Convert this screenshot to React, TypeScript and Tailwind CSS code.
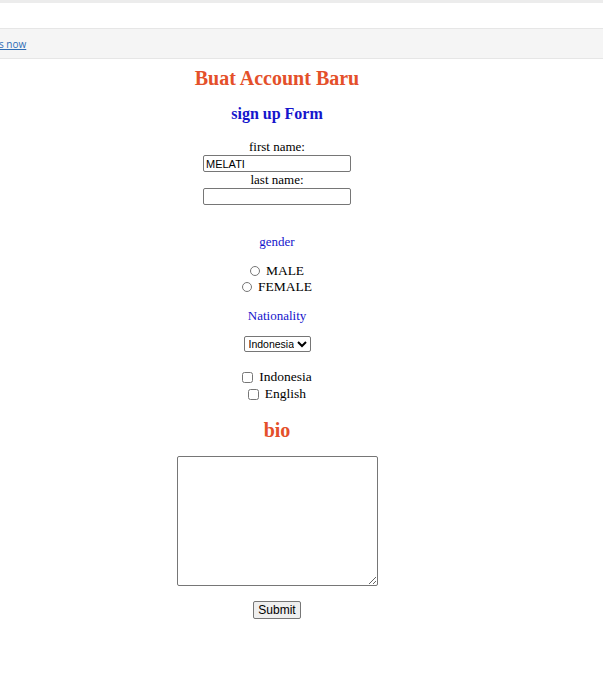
import React from "react";

export default function App() {
  const serif = { fontFamily: '"Liberation Serif", "Times New Roman", serif' };
  const sans = { fontFamily: '"Liberation Sans", Arial, sans-serif' };
  return (
    <div className="w-[603px] h-[675px] bg-white overflow-hidden" style={serif}>
      <div className="h-[3px] bg-[#ececec]" />
      <div className="h-[25px] bg-white" />
      <div className="h-[31px] bg-[#f5f5f5] border-t border-b border-[#e6e6e6] flex items-center">
        <a
          href="#"
          className="text-[10px] leading-none text-[#2f6db5] underline -ml-[1px]"
          style={{ fontFamily: '"Open Sans", "Liberation Sans", sans-serif' }}
        >
          s now
        </a>
      </div>
      <div className="w-[554px] flex flex-col items-center text-black">
        <h1 className="mt-[7px] text-[20px] leading-[24px] font-bold text-[#e4502a]">Buat Account Baru</h1>
        <h2 className="mt-[14px] text-[16px] leading-[20px] font-bold text-[#1515cc]">sign up Form</h2>
        <div className="mt-[15px] text-[13px] leading-[15px]">first name:</div>
        <input
          defaultValue="MELATI"
          className="mt-[1px] w-[148px] h-[17px] border border-[#767676] rounded-[2px] px-[2px] text-[11px] leading-none text-black"
          style={sans}
        />
        <div className="text-[13px] leading-[15px]">last name:</div>
        <input
          className="mt-[1px] w-[148px] h-[17px] border border-[#767676] rounded-[2px] px-[2px] text-[11px]"
          style={sans}
        />
        <div className="mt-[29px] text-[13px] leading-[15px] text-[#1515cc]">gender</div>
        <label className="mt-[14px] flex items-center text-[13.5px] leading-[16px]">
          <input type="radio" name="g" className="w-[10px] h-[10px] mr-[6px] m-0" />
          MALE
        </label>
        <label className="flex items-center text-[13.5px] leading-[16px]">
          <input type="radio" name="g" className="w-[10px] h-[10px] mr-[6px] m-0" />
          FEMALE
        </label>
        <div className="mt-[13px] text-[13px] leading-[15px] text-[#1515cc]">Nationality</div>
        <select
          className="mt-[13px] w-[67px] h-[16px] border border-[#767676] rounded-[2px] text-[10.5px] leading-none pl-0"
          style={sans}
          defaultValue="Indonesia"
        >
          <option>Indonesia</option>
          <option>English</option>
        </select>
        <label className="mt-[17px] flex items-center text-[13.5px] leading-[16px]">
          <input type="checkbox" className="w-[11px] h-[11px] mr-[6px] m-0" />
          Indonesia
        </label>
        <label className="mt-[1px] flex items-center text-[13.5px] leading-[16px]">
          <input type="checkbox" className="w-[11px] h-[11px] mr-[6px] m-0" />
          English
        </label>
        <h2 className="mt-[16px] text-[20px] leading-[24px] font-bold text-[#e4502a]">bio</h2>
        <textarea className="mt-[14px] w-[201px] h-[130px] border border-[#767676] rounded-[2px]" />
        <button
          className="mt-[15px] h-[18px] px-[4px] border border-[#767676] rounded-[2px] bg-[#efefef] text-[12px] leading-none text-black"
          style={sans}
        >
          Submit
        </button>
      </div>
    </div>
  );
}
